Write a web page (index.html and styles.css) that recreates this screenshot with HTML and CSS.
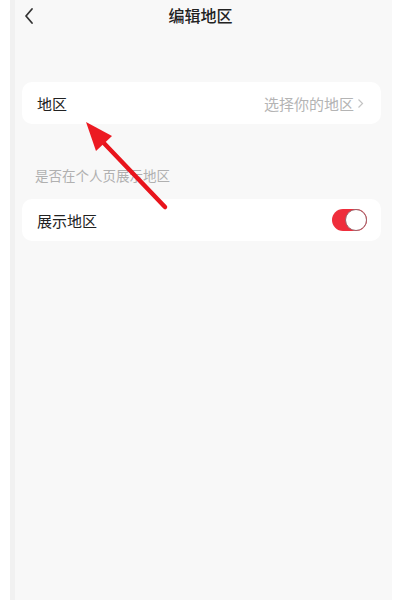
FILE: index.html
```html
<!DOCTYPE html>
<html lang="zh">
<head>
<meta charset="utf-8">
<link rel="stylesheet" href="styles.css">
</head>
<body>
<div class="screen">
  <div class="header">
    <svg class="back" width="12" height="18" viewBox="0 0 12 18"><path d="M9 2 L3 9 L9 16" fill="none" stroke="#333" stroke-width="1.8" stroke-linecap="round" stroke-linejoin="round"/></svg>
    <div class="title">编辑地区</div>
  </div>
  <div class="card first">
    <span class="label">地区</span>
    <span class="value">选择你的地区<svg class="chev" width="7" height="11" viewBox="0 0 7 11"><path d="M1.5 1.5 L5.5 5.5 L1.5 9.5" fill="none" stroke="#c4c4c4" stroke-width="1.2"/></svg></span>
  </div>
  <div class="section">是否在个人页展示地区</div>
  <div class="card">
    <span class="label">展示地区</span>
    <span class="toggle"><span class="knob"></span></span>
  </div>
  <svg class="arrow" width="400" height="608" viewBox="0 0 400 608">
    <line x1="165" y1="207" x2="100" y2="139" stroke="#e8141c" stroke-width="4.5" stroke-linecap="round"/>
    <polygon points="86,122 96,151 112,136" fill="#ec1a22"/>
  </svg>
</div>
</body>
</html>
```
FILE: styles.css
```css
html, body {
  margin: 0;
  padding: 0;
  background: #ffffff;
}
body {
  font-family: "Noto Sans CJK SC", "Noto Sans", sans-serif;
}
.screen {
  margin-left: 10px;
  width: 377px;
  height: 600px;
  background: #f8f8f8;
  border-left: 5px solid #f1f1f1;
  display: flex;
  flex-direction: column;
}
.header {
  height: 30px;
  display: flex;
  align-items: center;
  justify-content: center;
  position: relative;
  margin-bottom: 4px;
}
.back {
  position: absolute;
  left: 8px;
  top: 7px;
}
.title {
  font-size: 16px;
  font-weight: 500;
  color: #222;
  margin-left: -6px;
}
.card {
  margin: 0 11px 0 7px;
  height: 42px;
  background: #ffffff;
  border-radius: 10px;
  display: flex;
  align-items: center;
  justify-content: space-between;
  padding: 0 14px 0 15px;
}
.card.first {
  margin-top: 48px;
}
.label {
  font-size: 15px;
  color: #222;
}
.value {
  font-size: 15px;
  color: #b4b4b4;
  display: flex;
  align-items: center;
  gap: 3px;
  margin-right: 3px;
}
.section {
  font-size: 13.5px;
  color: #b0b0b0;
  margin: 42px 0 14px 20px;
  height: 19px;
  line-height: 19px;
}
.toggle {
  width: 35px;
  height: 22px;
  border-radius: 11px;
  background: #ef2e3c;
  position: relative;
}
.knob {
  position: absolute;
  right: 0;
  top: 0;
  width: 20px;
  height: 20px;
  border-radius: 50%;
  background: #fff;
  border: 1px solid #9a6068;
}
.arrow {
  position: absolute;
  left: 0;
  top: 0;
  pointer-events: none;
}
```
